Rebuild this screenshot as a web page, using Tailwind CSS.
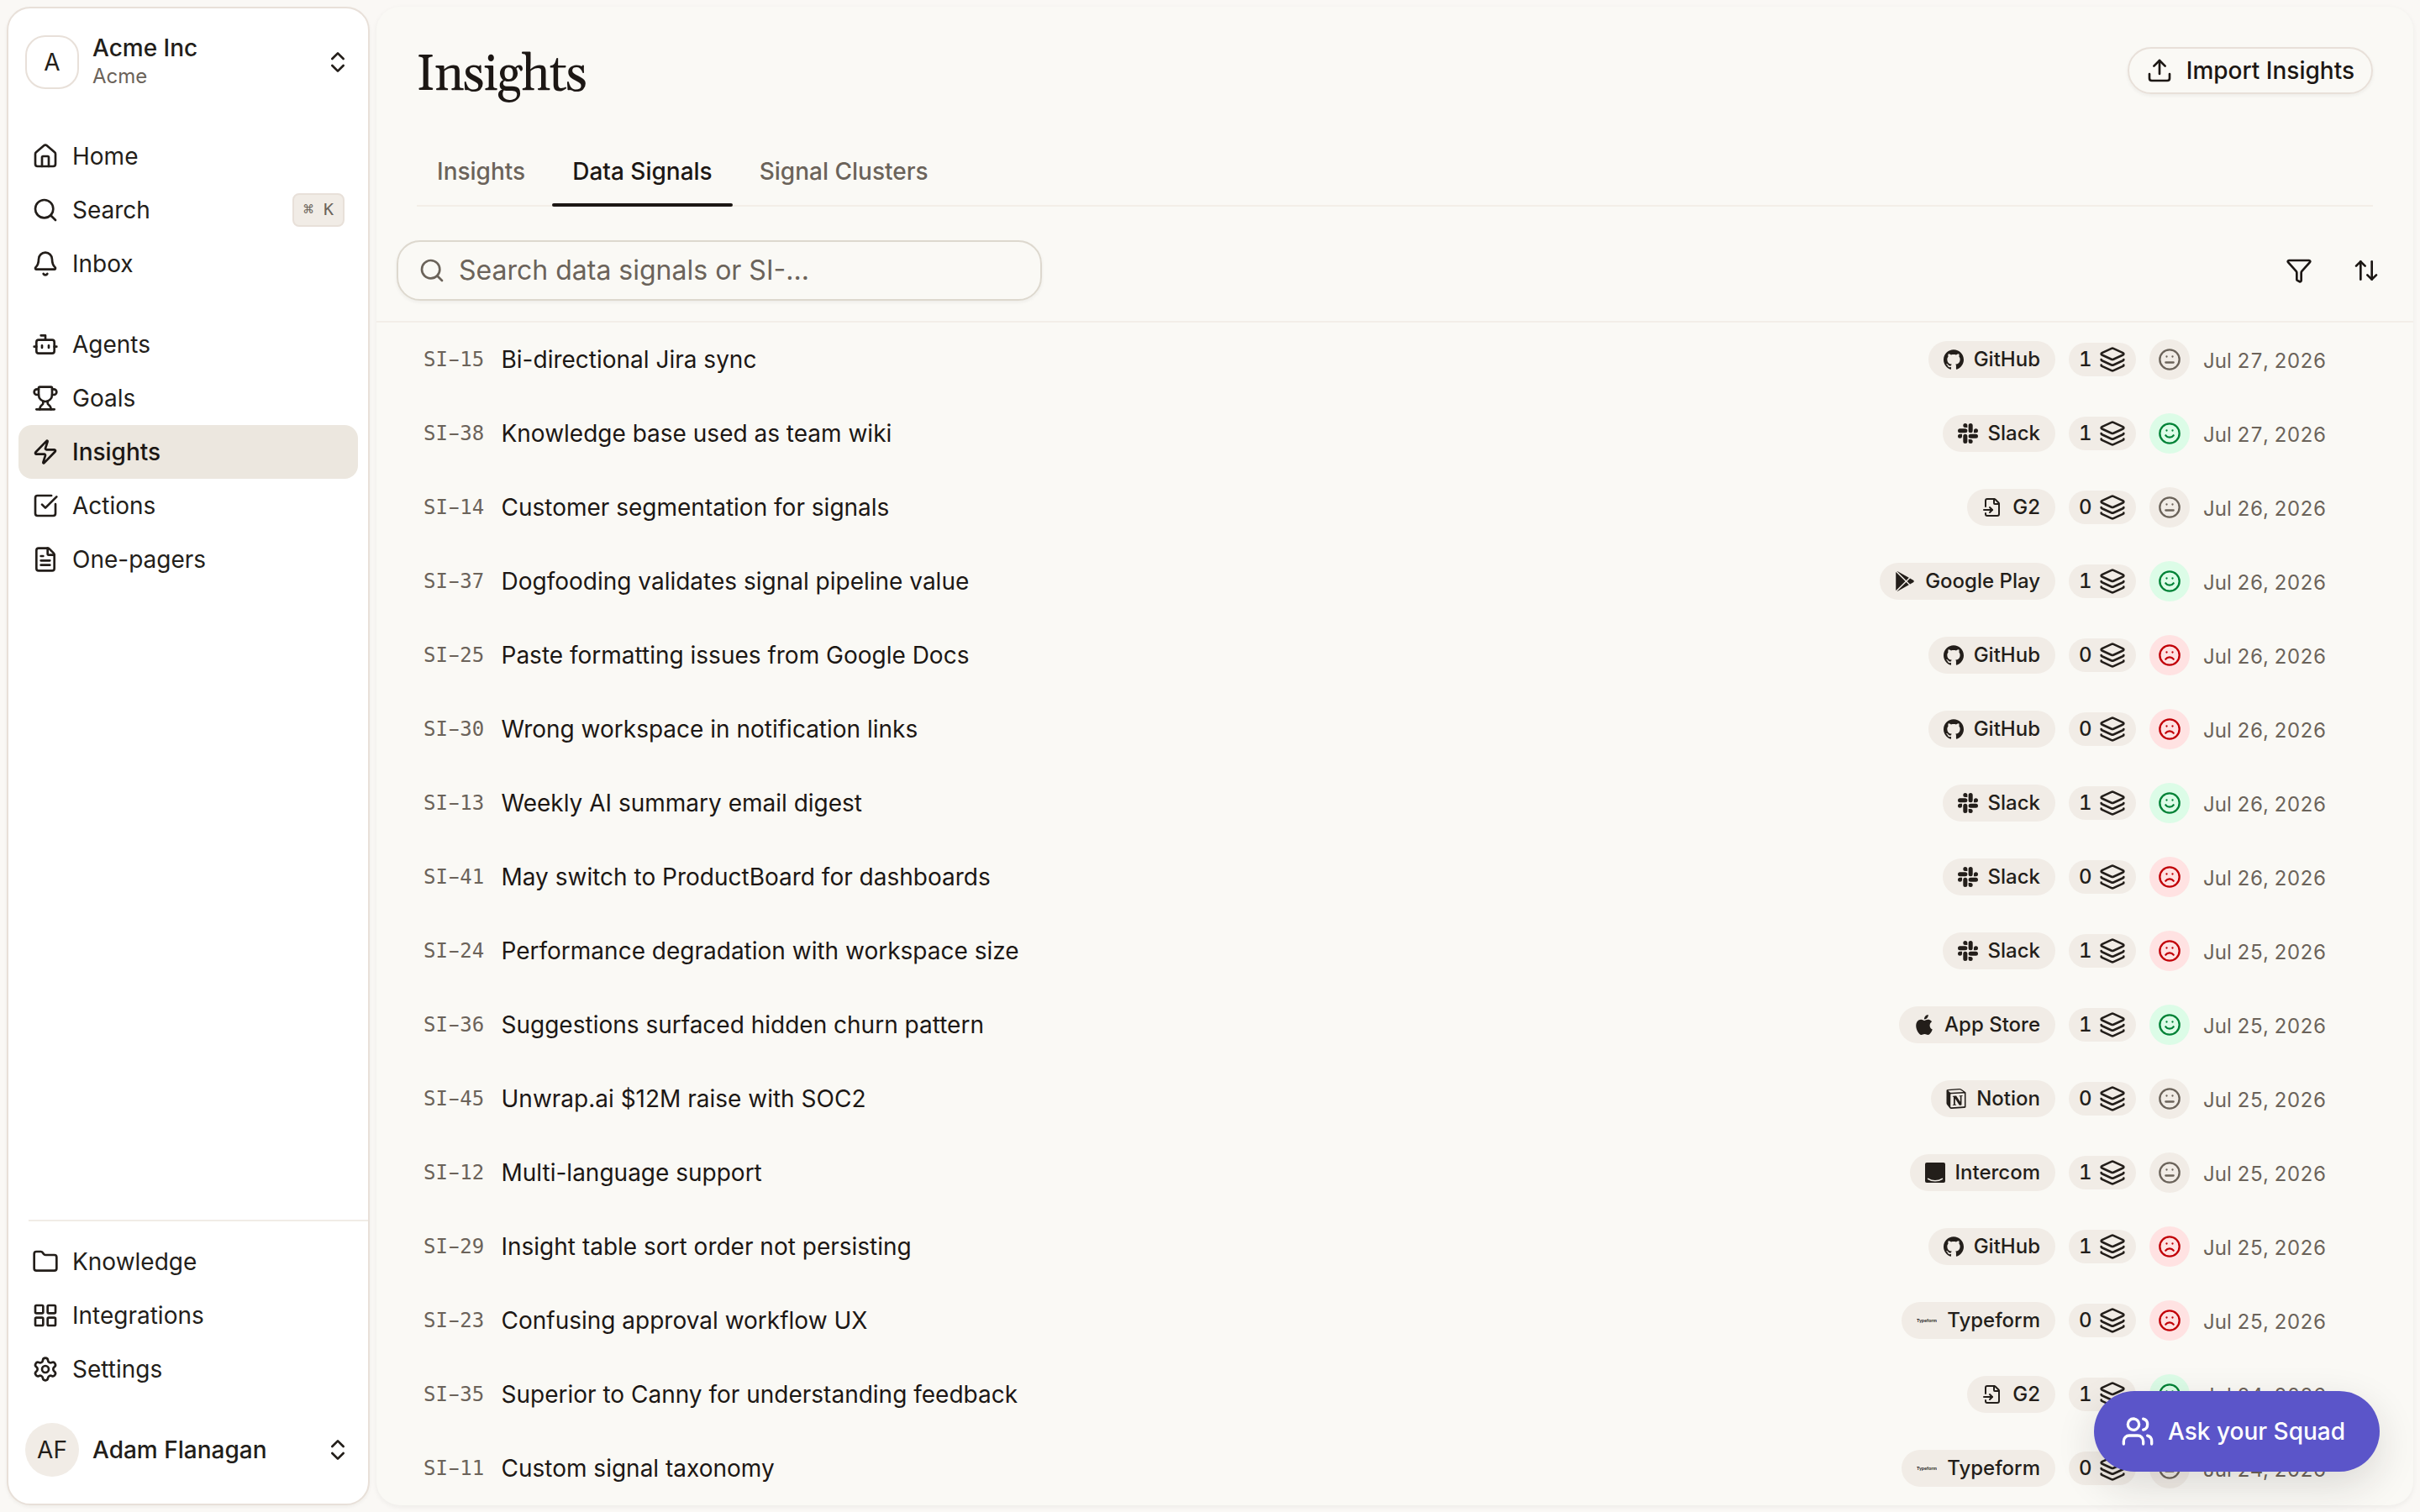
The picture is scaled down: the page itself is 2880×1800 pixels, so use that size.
<!DOCTYPE html>
<html lang="en">
<head>
  <meta charset="UTF-8" />
  <meta name="viewport" content="width=device-width, initial-scale=1.0"/>
  <title>Insights</title>
  <script src="https://cdn.jsdelivr.net/npm/@tailwindcss/browser@4"></script>
</head>
<body class="bg-[#faf8f5] text-[#231e1a] font-['Inter',sans-serif] text-[28px] leading-[40px] w-[2880px] h-[1800px] overflow-hidden">
  <!-- Icon sprite -->
  <svg class="hidden" xmlns="http://www.w3.org/2000/svg">
    <symbol id="home" viewBox="0 0 24 24"><path d="M15 21v-8a1 1 0 0 0-1-1h-4a1 1 0 0 0-1 1v8"/><path d="M3 10a2 2 0 0 1 .709-1.528l7-6a2 2 0 0 1 2.582 0l7 6A2 2 0 0 1 21 10v9a2 2 0 0 1-2 2H5a2 2 0 0 1-2-2z"/></symbol>
    <symbol id="search" viewBox="0 0 24 24"><path d="m21 21-4.34-4.34"/><circle cx="11" cy="11" r="8"/></symbol>
    <symbol id="bell" viewBox="0 0 24 24"><path d="M10.268 21a2 2 0 0 0 3.464 0"/><path d="M3.262 15.326A1 1 0 0 0 4 17h16a1 1 0 0 0 .74-1.673C19.41 13.956 18 12.499 18 8A6 6 0 0 0 6 8c0 4.499-1.411 5.956-2.738 7.326"/></symbol>
    <symbol id="bot" viewBox="0 0 24 24"><path d="M12 8V4H8"/><rect width="16" height="12" x="4" y="8" rx="2"/><path d="M2 14h2M20 14h2M15 13v2M9 13v2"/></symbol>
    <symbol id="trophy" viewBox="0 0 24 24"><path d="M10 14.66v1.626a2 2 0 0 1-.976 1.696A5 5 0 0 0 7 21.978"/><path d="M14 14.66v1.626a2 2 0 0 0 .976 1.696A5 5 0 0 1 17 21.978"/><path d="M18 9h1.5a1 1 0 0 0 0-5H18"/><path d="M4 22h16"/><path d="M6 9a6 6 0 0 0 12 0V3a1 1 0 0 0-1-1H7a1 1 0 0 0-1 1z"/><path d="M6 9H4.5a1 1 0 0 1 0-5H6"/></symbol>
    <symbol id="zap" viewBox="0 0 24 24"><path d="M4 14a1 1 0 0 1-.78-1.63l9.9-10.2a.5.5 0 0 1 .86.46l-1.92 6.02A1 1 0 0 0 13 10h7a1 1 0 0 1 .78 1.63l-9.9 10.2a.5.5 0 0 1-.86-.46l1.92-6.02A1 1 0 0 0 11 14z"/></symbol>
    <symbol id="check" viewBox="0 0 24 24"><path d="M21 10.656V19a2 2 0 0 1-2 2H5a2 2 0 0 1-2-2V5a2 2 0 0 1 2-2h12.344"/><path d="m9 11 3 3L22 4"/></symbol>
    <symbol id="file-text" viewBox="0 0 24 24"><path d="M6 22a2 2 0 0 1-2-2V4a2 2 0 0 1 2-2h8a2.4 2.4 0 0 1 1.704.706l3.588 3.588A2.4 2.4 0 0 1 20 8v12a2 2 0 0 1-2 2z"/><path d="M14 2v5a1 1 0 0 0 1 1h5"/><path d="M10 9H8M16 13H8M16 17H8"/></symbol>
    <symbol id="folder" viewBox="0 0 24 24"><path d="M20 20a2 2 0 0 0 2-2V8a2 2 0 0 0-2-2h-7.9a2 2 0 0 1-1.69-.9L9.6 3.9A2 2 0 0 0 7.93 3H4a2 2 0 0 0-2 2v13a2 2 0 0 0 2 2Z"/></symbol>
    <symbol id="grid" viewBox="0 0 24 24"><rect width="7" height="7" x="3" y="3" rx="1"/><rect width="7" height="7" x="14" y="3" rx="1"/><rect width="7" height="7" x="14" y="14" rx="1"/><rect width="7" height="7" x="3" y="14" rx="1"/></symbol>
    <symbol id="settings" viewBox="0 0 24 24"><path d="M9.671 4.136a2.34 2.34 0 0 1 4.659 0 2.34 2.34 0 0 0 3.319 1.915 2.34 2.34 0 0 1 2.33 4.033 2.34 2.34 0 0 0 0 3.831 2.34 2.34 0 0 1-2.33 4.033 2.34 2.34 0 0 0-3.319 1.915 2.34 2.34 0 0 1-4.659 0 2.34 2.34 0 0 0-3.32-1.915 2.34 2.34 0 0 1-2.33-4.033 2.34 2.34 0 0 0 0-3.831A2.34 2.34 0 0 1 6.35 6.051a2.34 2.34 0 0 0 3.319-1.915"/><circle cx="12" cy="12" r="3"/></symbol>
    <symbol id="chevrons" viewBox="0 0 24 24"><path d="m7 15 5 5 5-5"/><path d="m7 9 5-5 5 5"/></symbol>
    <symbol id="upload" viewBox="0 0 24 24"><path d="M12 3v12"/><path d="m17 8-5-5-5 5"/><path d="M21 15v4a2 2 0 0 1-2 2H5a2 2 0 0 1-2-2v-4"/></symbol>
    <symbol id="funnel" viewBox="0 0 24 24"><path d="M10 20a1 1 0 0 0 .553.895l2 1A1 1 0 0 0 14 21v-7a2 2 0 0 1 .517-1.341L21.74 4.67A1 1 0 0 0 21 3H3a1 1 0 0 0-.742 1.67l7.225 7.989A2 2 0 0 1 10 14z"/></symbol>
    <symbol id="sort" viewBox="0 0 24 24"><path d="m21 16-4 4-4-4"/><path d="M17 20V4"/><path d="m3 8 4-4 4 4"/><path d="M7 4v16"/></symbol>
    <symbol id="layers" viewBox="0 0 24 24"><path d="M12.83 2.18a2 2 0 0 0-1.66 0L2.6 6.08a1 1 0 0 0 0 1.83l8.58 3.91a2 2 0 0 0 1.66 0l8.58-3.9a1 1 0 0 0 0-1.83z"/><path d="M2 12a1 1 0 0 0 .58.91l8.6 3.91a2 2 0 0 0 1.65 0l8.58-3.9A1 1 0 0 0 22 12"/><path d="M2 17a1 1 0 0 0 .58.91l8.6 3.91a2 2 0 0 0 1.65 0l8.58-3.9A1 1 0 0 0 22 17"/></symbol>
    <symbol id="meh" viewBox="0 0 24 24"><circle cx="12" cy="12" r="10"/><path d="M8 15h8M9 9h.01M15 9h.01"/></symbol>
    <symbol id="smile" viewBox="0 0 24 24"><circle cx="12" cy="12" r="10"/><path d="M8 14s1.5 2 4 2 4-2 4-2M9 9h.01M15 9h.01"/></symbol>
    <symbol id="frown" viewBox="0 0 24 24"><circle cx="12" cy="12" r="10"/><path d="M16 16s-1.5-2-4-2-4 2-4 2M9 9h.01M15 9h.01"/></symbol>
    <symbol id="users" viewBox="0 0 24 24"><path d="M16 21v-2a4 4 0 0 0-4-4H6a4 4 0 0 0-4 4v2"/><path d="M16 3.128a4 4 0 0 1 0 7.744"/><path d="M22 21v-2a4 4 0 0 0-3-3.87"/><circle cx="9" cy="7" r="4"/></symbol>
    <symbol id="g2" viewBox="0 0 24 24"><g fill="none" stroke="currentColor" stroke-width="2" stroke-linecap="round" stroke-linejoin="round"><path d="M4 11V4a2 2 0 0 1 2-2h8a2.4 2.4 0 0 1 1.706.706l3.588 3.588A2.4 2.4 0 0 1 20 8v12a2 2 0 0 1-2 2H6a2 2 0 0 1-2-2v-1"/><path d="M14 2v5a1 1 0 0 0 1 1h5"/><path d="M2 15h10"/><path d="m9 18 3-3-3-3"/></g></symbol>
    <symbol id="github" viewBox="0 0 24 24"><path d="M12 .297c-6.63 0-12 5.373-12 12 0 5.303 3.438 9.8 8.205 11.385.6.113.82-.258.82-.577 0-.285-.01-1.04-.015-2.04-3.338.724-4.042-1.61-4.042-1.61C4.422 18.07 3.633 17.7 3.633 17.7c-1.087-.744.084-.729.084-.729 1.205.084 1.838 1.236 1.838 1.236 1.07 1.835 2.809 1.305 3.495.998.108-.776.417-1.305.76-1.605-2.665-.3-5.466-1.332-5.466-5.93 0-1.31.465-2.38 1.235-3.22-.135-.303-.54-1.523.105-3.176 0 0 1.005-.322 3.3 1.23.96-.267 1.98-.399 3-.405 1.02.006 2.04.138 3 .405 2.28-1.552 3.285-1.23 3.285-1.23.645 1.653.24 2.873.12 3.176.765.84 1.23 1.91 1.23 3.22 0 4.61-2.805 5.625-5.475 5.92.42.36.81 1.096.81 2.22 0 1.606-.015 2.896-.015 3.286 0 .315.21.69.825.57C20.565 22.092 24 17.592 24 12.297c0-6.627-5.373-12-12-12"/></symbol>
    <symbol id="slack" viewBox="0 0 24 24"><path d="M5.042 15.165a2.528 2.528 0 0 1-2.52 2.523A2.528 2.528 0 0 1 0 15.165a2.527 2.527 0 0 1 2.522-2.52h2.52v2.52zM6.313 15.165a2.527 2.527 0 0 1 2.521-2.52 2.527 2.527 0 0 1 2.521 2.52v6.313A2.528 2.528 0 0 1 8.834 24a2.528 2.528 0 0 1-2.521-2.522v-6.313zM8.834 5.042a2.528 2.528 0 0 1-2.521-2.52A2.528 2.528 0 0 1 8.834 0a2.528 2.528 0 0 1 2.521 2.522v2.52H8.834zM8.834 6.313a2.528 2.528 0 0 1 2.521 2.521 2.528 2.528 0 0 1-2.521 2.521H2.522A2.528 2.528 0 0 1 0 8.834a2.528 2.528 0 0 1 2.522-2.521h6.312zM18.956 8.834a2.528 2.528 0 0 1 2.522-2.521A2.528 2.528 0 0 1 24 8.834a2.528 2.528 0 0 1-2.522 2.521h-2.522V8.834zM17.688 8.834a2.528 2.528 0 0 1-2.523 2.521 2.527 2.527 0 0 1-2.52-2.521V2.522A2.527 2.527 0 0 1 15.165 0a2.528 2.528 0 0 1 2.523 2.522v6.312zM15.165 18.956a2.528 2.528 0 0 1 2.523 2.522A2.528 2.528 0 0 1 15.165 24a2.527 2.527 0 0 1-2.52-2.522v-2.522h2.52zM15.165 17.688a2.527 2.527 0 0 1-2.52-2.523 2.526 2.526 0 0 1 2.52-2.52h6.313A2.527 2.527 0 0 1 24 15.165a2.528 2.528 0 0 1-2.522 2.523h-6.313z"/></symbol>
    <symbol id="apple" viewBox="0 0 24 24"><path d="M12.152 6.896c-.948 0-2.415-1.078-3.96-1.04-2.04.027-3.91 1.183-4.961 3.014-2.117 3.675-.546 9.103 1.519 12.09 1.013 1.454 2.208 3.09 3.792 3.039 1.52-.065 2.09-.987 3.935-.987 1.831 0 2.35.987 3.96.948 1.637-.026 2.676-1.48 3.676-2.948 1.156-1.688 1.636-3.325 1.662-3.415-.039-.013-3.182-1.221-3.22-4.857-.026-3.04 2.48-4.494 2.597-4.559-1.429-2.09-3.623-2.324-4.39-2.376-2-.156-3.675 1.09-4.61 1.09zM15.53 3.83c.843-1.012 1.4-2.427 1.245-3.83-1.207.052-2.662.805-3.532 1.818-.78.896-1.454 2.338-1.273 3.714 1.338.104 2.715-.688 3.559-1.701"/></symbol>
    <symbol id="play" viewBox="0 0 24 24"><path d="M22.018 13.298l-3.919 2.218-3.515-3.493 3.543-3.521 3.891 2.202a1.49 1.49 0 0 1 0 2.594zM1.337.924a1.486 1.486 0 0 0-.112.568v21.017c0 .217.045.419.124.6l11.155-11.087L1.337.924zm12.207 10.065l3.258-3.238L3.45.195a1.466 1.466 0 0 0-.946-.179l11.04 10.973zm0 2.067l-11 10.933c.298.036.612-.016.906-.183l13.324-7.54-3.23-3.21z"/></symbol>
    <symbol id="notion" viewBox="0 0 24 24"><path d="M4.459 4.208c.746.606 1.026.56 2.428.466l13.215-.793c.28 0 .047-.28-.046-.326L17.86 1.968c-.42-.326-.981-.7-2.055-.607L3.01 2.295c-.466.046-.56.28-.374.466zm.793 3.08v13.904c0 .747.373 1.027 1.214.98l14.523-.84c.841-.046.935-.56.935-1.167V6.354c0-.606-.233-.933-.748-.887l-15.177.887c-.56.047-.747.327-.747.933zm14.337.745c.093.42 0 .84-.42.888l-.7.14v10.264c-.608.327-1.168.514-1.635.514-.748 0-.935-.234-1.495-.933l-4.577-7.186v6.952L12.21 19s0 .84-1.168.84l-3.222.186c-.093-.186 0-.653.327-.746l.84-.233V9.854L7.822 9.76c-.094-.42.14-1.026.793-1.073l3.456-.233 4.764 7.279v-6.44l-1.215-.139c-.093-.514.28-.887.747-.933zM1.936 1.035l13.31-.98c1.634-.14 2.055-.047 3.082.7l4.249 2.986c.7.513.934.653.934 1.213v16.378c0 1.026-.373 1.634-1.68 1.726l-15.458.934c-.98.047-1.448-.093-1.962-.747l-3.129-4.06c-.56-.747-.793-1.306-.793-1.96V2.667c0-.839.374-1.54 1.447-1.632z"/></symbol>
    <symbol id="intercom" viewBox="0 0 24 24"><rect width="24" height="24" rx="2"/><path d="M3.6 19.4c4.800 3.200 12 3.200 16.800 0" fill="none" stroke="#f1ece6" stroke-width="1.6" stroke-linecap="round"/></symbol>
    <symbol id="typeform" viewBox="0 0 24 24"><text x="0" y="13.5" font-family="Lato, sans-serif" font-weight="700" font-size="5.6" textLength="24" lengthAdjust="spacingAndGlyphs">Typeform</text></symbol>
  </svg>

  <div class="flex h-[1800px] gap-2 p-2">
    <!-- Sidebar -->
    <aside class="flex flex-col w-[432px] h-[1784px] shrink-0 bg-white border-2 border-[#e8e0d9] rounded-[28px] shadow-[0_2px_4px_rgba(35,30,26,0.05)]">
      <div class="flex items-center h-16 mt-8 pl-5 pr-5">
        <div class="flex items-center justify-center size-16 border-2 border-[#e8e0d9] rounded-[24px]">A</div>
        <div class="ml-4 -mt-px flex-1">
          <div class="font-medium leading-[35px]">Acme Inc</div>
          <div class="text-[24px] leading-[32px] text-[#6b635a]">Acme</div>
        </div>
        <svg class="size-8 fill-none stroke-current stroke-2 [stroke-linecap:round] [stroke-linejoin:round]"><use href="#chevrons"/></svg>
      </div>

      <nav class="flex flex-col mt-12 px-3" id="nav-main"></nav>
      <nav class="flex flex-col mt-8 px-3" id="nav-work"></nav>

      <div class="mt-auto ml-6 border-t-2 border-[#f1ece6]"></div>
      <nav class="flex flex-col mt-4 px-3" id="nav-more"></nav>

      <div class="flex items-center h-16 mt-8 mb-8 px-5">
        <div class="flex items-center justify-center size-16 bg-[#f1ece6] rounded-full">AF</div>
        <div class="ml-4 flex-1 font-medium">Adam Flanagan</div>
        <svg class="size-8 fill-none stroke-current stroke-2 [stroke-linecap:round] [stroke-linejoin:round]"><use href="#chevrons"/></svg>
      </div>
    </aside>

    <!-- Main panel -->
    <main class="flex flex-col w-[2424px] h-[1784px] bg-[#faf9f5] rounded-[28px] overflow-hidden shadow-[0_2px_6px_rgba(35,30,26,0.06)]">
      <header class="flex items-start justify-between h-[156px] pt-12 px-12">
        <h1 class="pt-0.5 -ml-px font-['Gelasio',serif] text-[60px] leading-[64px] tracking-tight text-[#1c1714]">Insights</h1>
        <button class="flex items-center gap-4 h-14 px-5 border-2 border-[#e8e0d9] rounded-[28px] font-medium text-[#1c1714] shadow-[0_2px_4px_rgba(35,30,26,0.06)]">
          <svg class="size-8 fill-none stroke-current stroke-2 [stroke-linecap:round] [stroke-linejoin:round]"><use href="#upload"/></svg>
          Import Insights
        </button>
      </header>

      <!-- Tabs -->
      <div class="flex gap-2 mx-12 h-[82px] border-b-2 border-[#f3eee8] font-medium text-[#6b635a]">
        <div class="px-6 pt-5">Insights</div>
        <div class="relative px-6 pt-5 text-[#1c1714]">
          Data Signals
          <span class="absolute inset-x-0 -bottom-0.5 h-1 rounded-full bg-[#1c1714]"></span>
        </div>
        <div class="px-6 pt-5">Signal Clusters</div>
      </div>

      <!-- Toolbar -->
      <div class="flex items-center h-[138px] pl-6 pr-10 pt-10 pb-6 border-b-2 border-[#f3eee8]">
        <div class="flex items-center gap-4 w-[768px] h-[72px] px-6 border-2 border-[#ddd8ce] rounded-[28px] text-[32px] text-[#6b635a] shadow-[0_2px_4px_rgba(35,30,26,0.06)]">
          <svg class="size-8 fill-none stroke-current stroke-2 [stroke-linecap:round] [stroke-linejoin:round]"><use href="#search"/></svg>
          Search data signals or SI-...
        </div>
        <div class="flex gap-12 ml-auto text-[#1c1714]">
          <svg class="size-8 fill-none stroke-current stroke-2 [stroke-linecap:round] [stroke-linejoin:round]"><use href="#funnel"/></svg>
          <svg class="size-8 fill-none stroke-current stroke-2 [stroke-linecap:round] [stroke-linejoin:round]"><use href="#sort"/></svg>
        </div>
      </div>

      <div id="signals" class="flex flex-col"></div>
    </main>
  </div>

  <button class="absolute right-12 bottom-12 flex items-center gap-4 w-[340px] h-24 pl-8 bg-[#5b55c9] text-white rounded-full font-medium shadow-[0_16px_48px_rgba(35,30,26,0.14)]">
    <svg class="size-10 fill-none stroke-current stroke-2 [stroke-linecap:round] [stroke-linejoin:round]"><use href="#users"/></svg>
    Ask your Squad
  </button>

  <script>
    const navs = {
      'nav-main': [['home', 'Home'], ['search', 'Search'], ['bell', 'Inbox']],
      'nav-work': [['bot', 'Agents'], ['trophy', 'Goals'], ['zap', 'Insights'], ['check', 'Actions'], ['file-text', 'One-pagers']],
      'nav-more': [['folder', 'Knowledge'], ['grid', 'Integrations'], ['settings', 'Settings']]
    };
    for (const [id, items] of Object.entries(navs)) {
      document.getElementById(id).innerHTML = items.map(([icon, label]) => `
        <a class="flex items-center gap-4 h-16 px-4 rounded-[16px] ${label === 'Insights' ? 'bg-[#ece7df] font-medium text-[#1c1714]' : ''}">
          <svg class="size-8 fill-none stroke-current stroke-2 [stroke-linecap:round] [stroke-linejoin:round]"><use href="#${icon}"/></svg>
          ${label}
          ${label === 'Search' ? `<kbd class="ml-auto w-[62px] h-10 bg-[#f1ece6] border-2 border-[#e8e0d9] rounded-lg font-['DejaVu_Sans_Mono',monospace] text-[20px] leading-[34px] text-center whitespace-nowrap text-[#6b635a]">⌘ K</kbd>` : ''}
        </a>`).join('');
    }

    const signals = [
      ['SI-15', 'Bi-directional Jira sync', 'github', 'GitHub', 1, 'meh', 'Jul 27, 2026'],
      ['SI-38', 'Knowledge base used as team wiki', 'slack', 'Slack', 1, 'smile', 'Jul 27, 2026'],
      ['SI-14', 'Customer segmentation for signals', 'g2', 'G2', 0, 'meh', 'Jul 26, 2026'],
      ['SI-37', 'Dogfooding validates signal pipeline value', 'play', 'Google Play', 1, 'smile', 'Jul 26, 2026'],
      ['SI-25', 'Paste formatting issues from Google Docs', 'github', 'GitHub', 0, 'frown', 'Jul 26, 2026'],
      ['SI-30', 'Wrong workspace in notification links', 'github', 'GitHub', 0, 'frown', 'Jul 26, 2026'],
      ['SI-13', 'Weekly AI summary email digest', 'slack', 'Slack', 1, 'smile', 'Jul 26, 2026'],
      ['SI-41', 'May switch to ProductBoard for dashboards', 'slack', 'Slack', 0, 'frown', 'Jul 26, 2026'],
      ['SI-24', 'Performance degradation with workspace size', 'slack', 'Slack', 1, 'frown', 'Jul 25, 2026'],
      ['SI-36', 'Suggestions surfaced hidden churn pattern', 'apple', 'App Store', 1, 'smile', 'Jul 25, 2026'],
      ['SI-45', 'Unwrap.ai $12M raise with SOC2', 'notion', 'Notion', 0, 'meh', 'Jul 25, 2026'],
      ['SI-12', 'Multi-language support', 'intercom', 'Intercom', 1, 'meh', 'Jul 25, 2026'],
      ['SI-29', 'Insight table sort order not persisting', 'github', 'GitHub', 1, 'frown', 'Jul 25, 2026'],
      ['SI-23', 'Confusing approval workflow UX', 'typeform', 'Typeform', 0, 'frown', 'Jul 25, 2026'],
      ['SI-35', 'Superior to Canny for understanding feedback', 'g2', 'G2', 1, 'smile', 'Jul 24, 2026'],
      ['SI-11', 'Custom signal taxonomy', 'typeform', 'Typeform', 0, 'meh', 'Jul 24, 2026']
    ];
    const moods = {
      meh: 'bg-[#f1ece6] text-[#6b635a]',
      smile: 'bg-[#dcfce7] text-[#008236]',
      frown: 'bg-[#ffe2e2] text-[#c10007]'
    };
    document.getElementById('signals').innerHTML = signals.map(([id, title, icon, source, count, mood, date]) => `
      <div class="flex items-center h-[88px] pl-14 pr-[104px]">
        <span class="w-[92.5px] font-['DejaVu_Sans_Mono',monospace] text-[24px] text-[#6b635a]">${id.replace('-', '<span class="inline-block scale-x-170">-</span>')}</span>
        <span class="flex-1 text-[#1c1714]">${title}</span>
        <div class="flex items-center gap-4">
          <span class="flex items-center gap-3 h-11 px-[18px] bg-[#f1ece6] rounded-full text-[24px] font-medium">
            <svg class="size-6 fill-current"><use href="#${icon}"/></svg>${source}
          </span>
          <span class="flex items-center justify-between w-20 h-10 px-3 bg-[#f1ece6] rounded-full text-[24px] font-medium tabular-nums">
            ${count}<svg class="size-8 fill-none stroke-current stroke-2 [stroke-linecap:round] [stroke-linejoin:round]"><use href="#layers"/></svg>
          </span>
          <span class="flex items-center justify-center size-12 rounded-full ${moods[mood]}">
            <svg class="size-7 fill-none stroke-current stroke-2 [stroke-linecap:round] [stroke-linejoin:round]"><use href="#${mood}"/></svg>
          </span>
          <span class="w-[146px] mt-1 text-[24px] text-[#6b635a] tabular-nums whitespace-nowrap">${date}</span>
        </div>
      </div>`).join('');
  </script>
</body>
</html>
